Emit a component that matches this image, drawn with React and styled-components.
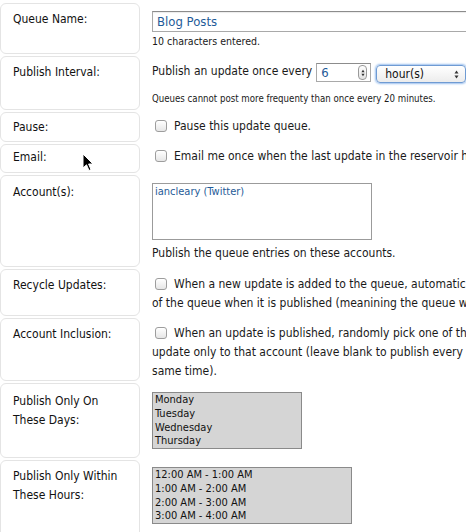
import React from "react";
import styled, { createGlobalStyle } from "styled-components";

const Global = createGlobalStyle`
  html, body { margin: 0; padding: 0; background: #fff; overflow: hidden; }
  body {
    font-family: "DejaVu Sans Condensed", "DejaVu Sans", sans-serif;
    color: #1a1a1a;
    width: 466px;
    height: 532px;
    position: relative;
  }
`;

const Form = styled.div`
  display: grid;
  grid-template-columns: 140px 720px;
  column-gap: 2px;
  row-gap: 2px;
  padding-top: 3px;
  align-items: start;
`;

const Label = styled.div`
  box-sizing: border-box;
  min-height: ${(p) => p.$h}px;
  border: 1px solid #e4e4e4;
  border-radius: 6px;
  padding: ${(p) => p.$pt ?? 6}px 10px 0 12px;
  font-size: 12px;
  line-height: 19px;
  color: #111;
`;

const Field = styled.div`
  padding: ${(p) => p.$pt}px 0 0 10px;
  font-size: 12px;
  line-height: 19px;
  white-space: nowrap;
`;

const TextInput = styled.div`
  box-sizing: border-box;
  width: 420px;
  height: 21px;
  border: 1px solid #a9a9a9;
  border-top-color: #8c8c8c;
  padding-left: 4px;
  font-size: 13px;
  line-height: 19px;
  color: #1f5b98;
  box-shadow: inset 0 1px 1px rgba(0, 0, 0, 0.08);
`;

const Hint = styled.div`
  font-size: ${(p) => p.$size || 10.5}px;
  line-height: 14px;
  margin-top: ${(p) => p.$mt || 0}px;
  color: #1a1a1a;
`;

const IntervalLine = styled.div`
  display: flex;
  align-items: flex-start;
  line-height: 16px;
`;

const NumberBox = styled.div`
  box-sizing: border-box;
  position: relative;
  width: 55px;
  height: 19px;
  margin-left: 4px;
  border: 1px solid #a9a9a9;
  border-top-color: #8c8c8c;
  padding-left: 4px;
  font-size: 13px;
  line-height: 18px;
  color: #1f5b98;
  display: flex;
  align-items: center;
  justify-content: space-between;
`;

const Spinner = styled.span`
  box-sizing: border-box;
  width: 9px;
  height: 15px;
  margin-right: 3px;
  border: 1px solid #9a9a9a;
  border-radius: 4px;
  background: linear-gradient(#fff, #e2e2e2);
  display: flex;
  align-items: center;
  justify-content: center;
`;

const Select = styled.div`
  box-sizing: border-box;
  width: 90px;
  height: 18px;
  margin: 2px 0 0 5px;
  border: 1px solid #6f9bd3;
  border-radius: 4px;
  box-shadow: 0 0 2px 1px #9cc0ee;
  background: linear-gradient(#ffffff, #ececec);
  padding: 0 6px 0 8px;
  font-size: 12px;
  line-height: 16px;
  color: #111;
  display: flex;
  align-items: center;
  justify-content: space-between;
`;

const Check = styled.span`
  display: inline-block;
  box-sizing: border-box;
  width: 12px;
  height: 12px;
  margin: 0 7px 0 3px;
  vertical-align: -2px;
  border: 1px solid #9d9d9d;
  border-radius: 3px;
  background: linear-gradient(#ffffff, #e6e6e6);
  box-shadow: inset 0 1px 0 #fff;
`;

const ListBox = styled.div`
  box-sizing: border-box;
  width: ${(p) => p.$w}px;
  height: 57px;
  border: 1px solid ${(p) => (p.$grey ? "#8a8a8a" : "#9b9b9b")};
  background: ${(p) => (p.$grey ? "#d5d5d5" : "#fff")};
  padding: 0 2px;
  font-size: 11px;
  line-height: 13.75px;
  color: ${(p) => (p.$grey ? "#111" : "#1f5b98")};
  overflow: hidden;
`;

const AccountItem = styled.div`
  padding-top: 1px;
`;

const Cursor = styled.svg`
  position: absolute;
  left: 82px;
  top: 153px;
`;

const UpDown = ({ w = 5, h = 9 }) => (
  <svg width={w} height={h} viewBox="0 0 5 9">
    <path d="M2.5 0.5 L4.5 3.5 L0.5 3.5 Z" fill="#333" />
    <path d="M2.5 8.5 L4.5 5.5 L0.5 5.5 Z" fill="#333" />
  </svg>
);

export default function App() {
  return (
    <>
      <Global />
      <Form>
        <Label $h={51}>Queue Name:</Label>
        <Field $pt={8}>
          <TextInput>Blog Posts</TextInput>
          <Hint $mt={2}>10 characters entered.</Hint>
        </Field>

        <Label $h={54}>Publish Interval:</Label>
        <Field $pt={7}>
          <IntervalLine>
            Publish an update once every
            <NumberBox>
              6
              <Spinner>
                <UpDown w={4} h={8} />
              </Spinner>
            </NumberBox>
            <Select>
              hour(s)
              <UpDown />
            </Select>
          </IntervalLine>
          <Hint $size={9.6} $mt={9}>
            Queues cannot post more frequenty than once every 20 minutes.
          </Hint>
        </Field>

        <Label $h={30} $pt={5}>Pause:</Label>
        <Field $pt={5}>
          <Check />
          Pause this update queue.
        </Field>

        <Label $h={29} $pt={3}>Email:</Label>
        <Field $pt={3}>
          <Check />
          Email me once when the last update in the reservoir has been published.
        </Field>

        <Label $h={92} $pt={7}>Account(s):</Label>
        <Field $pt={8}>
          <ListBox $w={220}>
            <AccountItem>iancleary (Twitter)</AccountItem>
          </ListBox>
          <Hint $size={12} $mt={6}>
            Publish the queue entries on these accounts.
          </Hint>
        </Field>

        <Label $h={47}>Recycle Updates:</Label>
        <Field $pt={6}>
          <Check />
          When a new update is added to the queue, automatically add it to the end
          <br />
          of the queue when it is published (meanining the queue will never run out).
        </Field>

        <Label $h={63}>Account Inclusion:</Label>
        <Field $pt={6}>
          <Check />
          When an update is published, randomly pick one of the accounts and send the
          <br />
          update only to that account (leave blank to publish every account at the
          <br />
          same time).
        </Field>

        <Label $h={75} $pt={8}>
          Publish Only On
          <br />
          These Days:
        </Label>
        <Field $pt={9}>
          <ListBox $w={150} $grey>
            <div>Monday</div>
            <div>Tuesday</div>
            <div>Wednesday</div>
            <div>Thursday</div>
          </ListBox>
        </Field>

        <Label $h={80}>
          Publish Only Within
          <br />
          These Hours:
        </Label>
        <Field $pt={7}>
          <ListBox $w={200} $grey>
            <div>12:00 AM - 1:00 AM</div>
            <div>1:00 AM - 2:00 AM</div>
            <div>2:00 AM - 3:00 AM</div>
            <div>3:00 AM - 4:00 AM</div>
          </ListBox>
        </Field>
      </Form>
      <Cursor width="12" height="19" viewBox="0 0 12 19">
        <path
          d="M1 1 L1 15 L4.5 11.8 L7 17.5 L9 16.6 L6.6 11 L11 11 Z"
          fill="#000"
          stroke="#fff"
          strokeWidth="1"
          strokeLinejoin="round"
        />
      </Cursor>
    </>
  );
}
